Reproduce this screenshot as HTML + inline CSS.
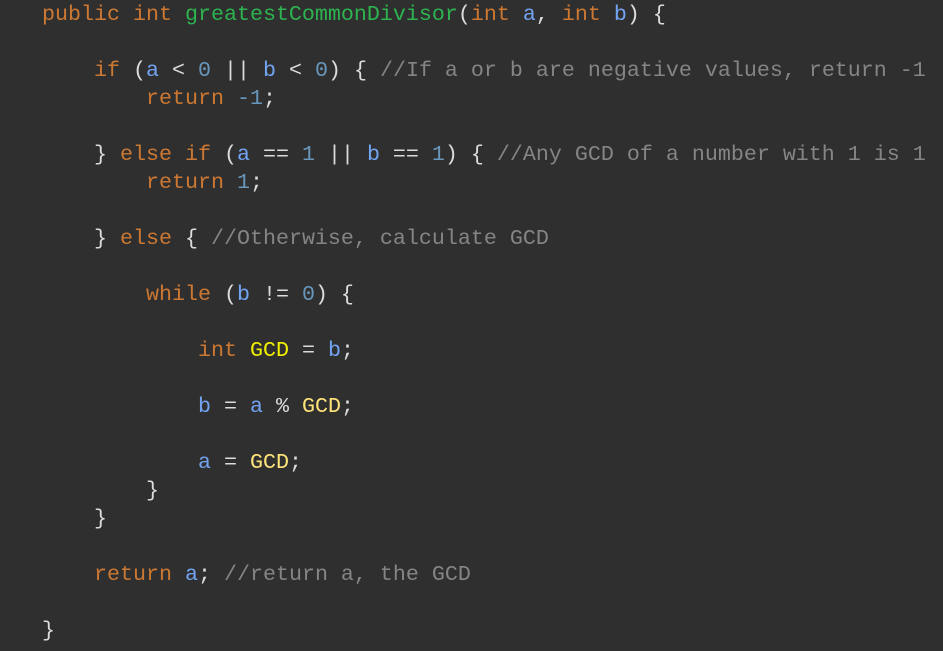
<!DOCTYPE html>
<html><head><meta charset="utf-8"><style>
html,body{margin:0;padding:0;background:#2f2f2f;width:943px;height:651px;overflow:hidden}
pre{margin:0;position:absolute;left:42px;top:1px;font-family:"Liberation Mono",monospace;font-size:21.67px;line-height:28px;color:#dcdcdc;white-space:pre}
.k{color:#cc7832}.m{color:#2db34f}.p{color:#72a4f2}.n{color:#6897bb}.c{color:#858585}.y{color:#f0f000}.g{color:#ffe47a}
</style></head><body>
<pre><span class="k">public int</span> <span class="m">greatestCommonDivisor</span>(<span class="k">int</span> <span class="p">a</span>, <span class="k">int</span> <span class="p">b</span>) {

    <span class="k">if</span> (<span class="p">a</span> &lt; <span class="n">0</span> || <span class="p">b</span> &lt; <span class="n">0</span>) { <span class="c">//If a or b are negative values, return -1</span>
        <span class="k">return</span> <span class="n">-1</span>;

    } <span class="k">else if</span> (<span class="p">a</span> == <span class="n">1</span> || <span class="p">b</span> == <span class="n">1</span>) { <span class="c">//Any GCD of a number with 1 is 1</span>
        <span class="k">return</span> <span class="n">1</span>;

    } <span class="k">else</span> { <span class="c">//Otherwise, calculate GCD</span>

        <span class="k">while</span> (<span class="p">b</span> != <span class="n">0</span>) {

            <span class="k">int</span> <span class="y">GCD</span> = <span class="p">b</span>;

            <span class="p">b</span> = <span class="p">a</span> % <span class="g">GCD</span>;

            <span class="p">a</span> = <span class="g">GCD</span>;
        }
    }

    <span class="k">return</span> <span class="p">a</span>; <span class="c">//return a, the GCD</span>

}</pre>
</body></html>
